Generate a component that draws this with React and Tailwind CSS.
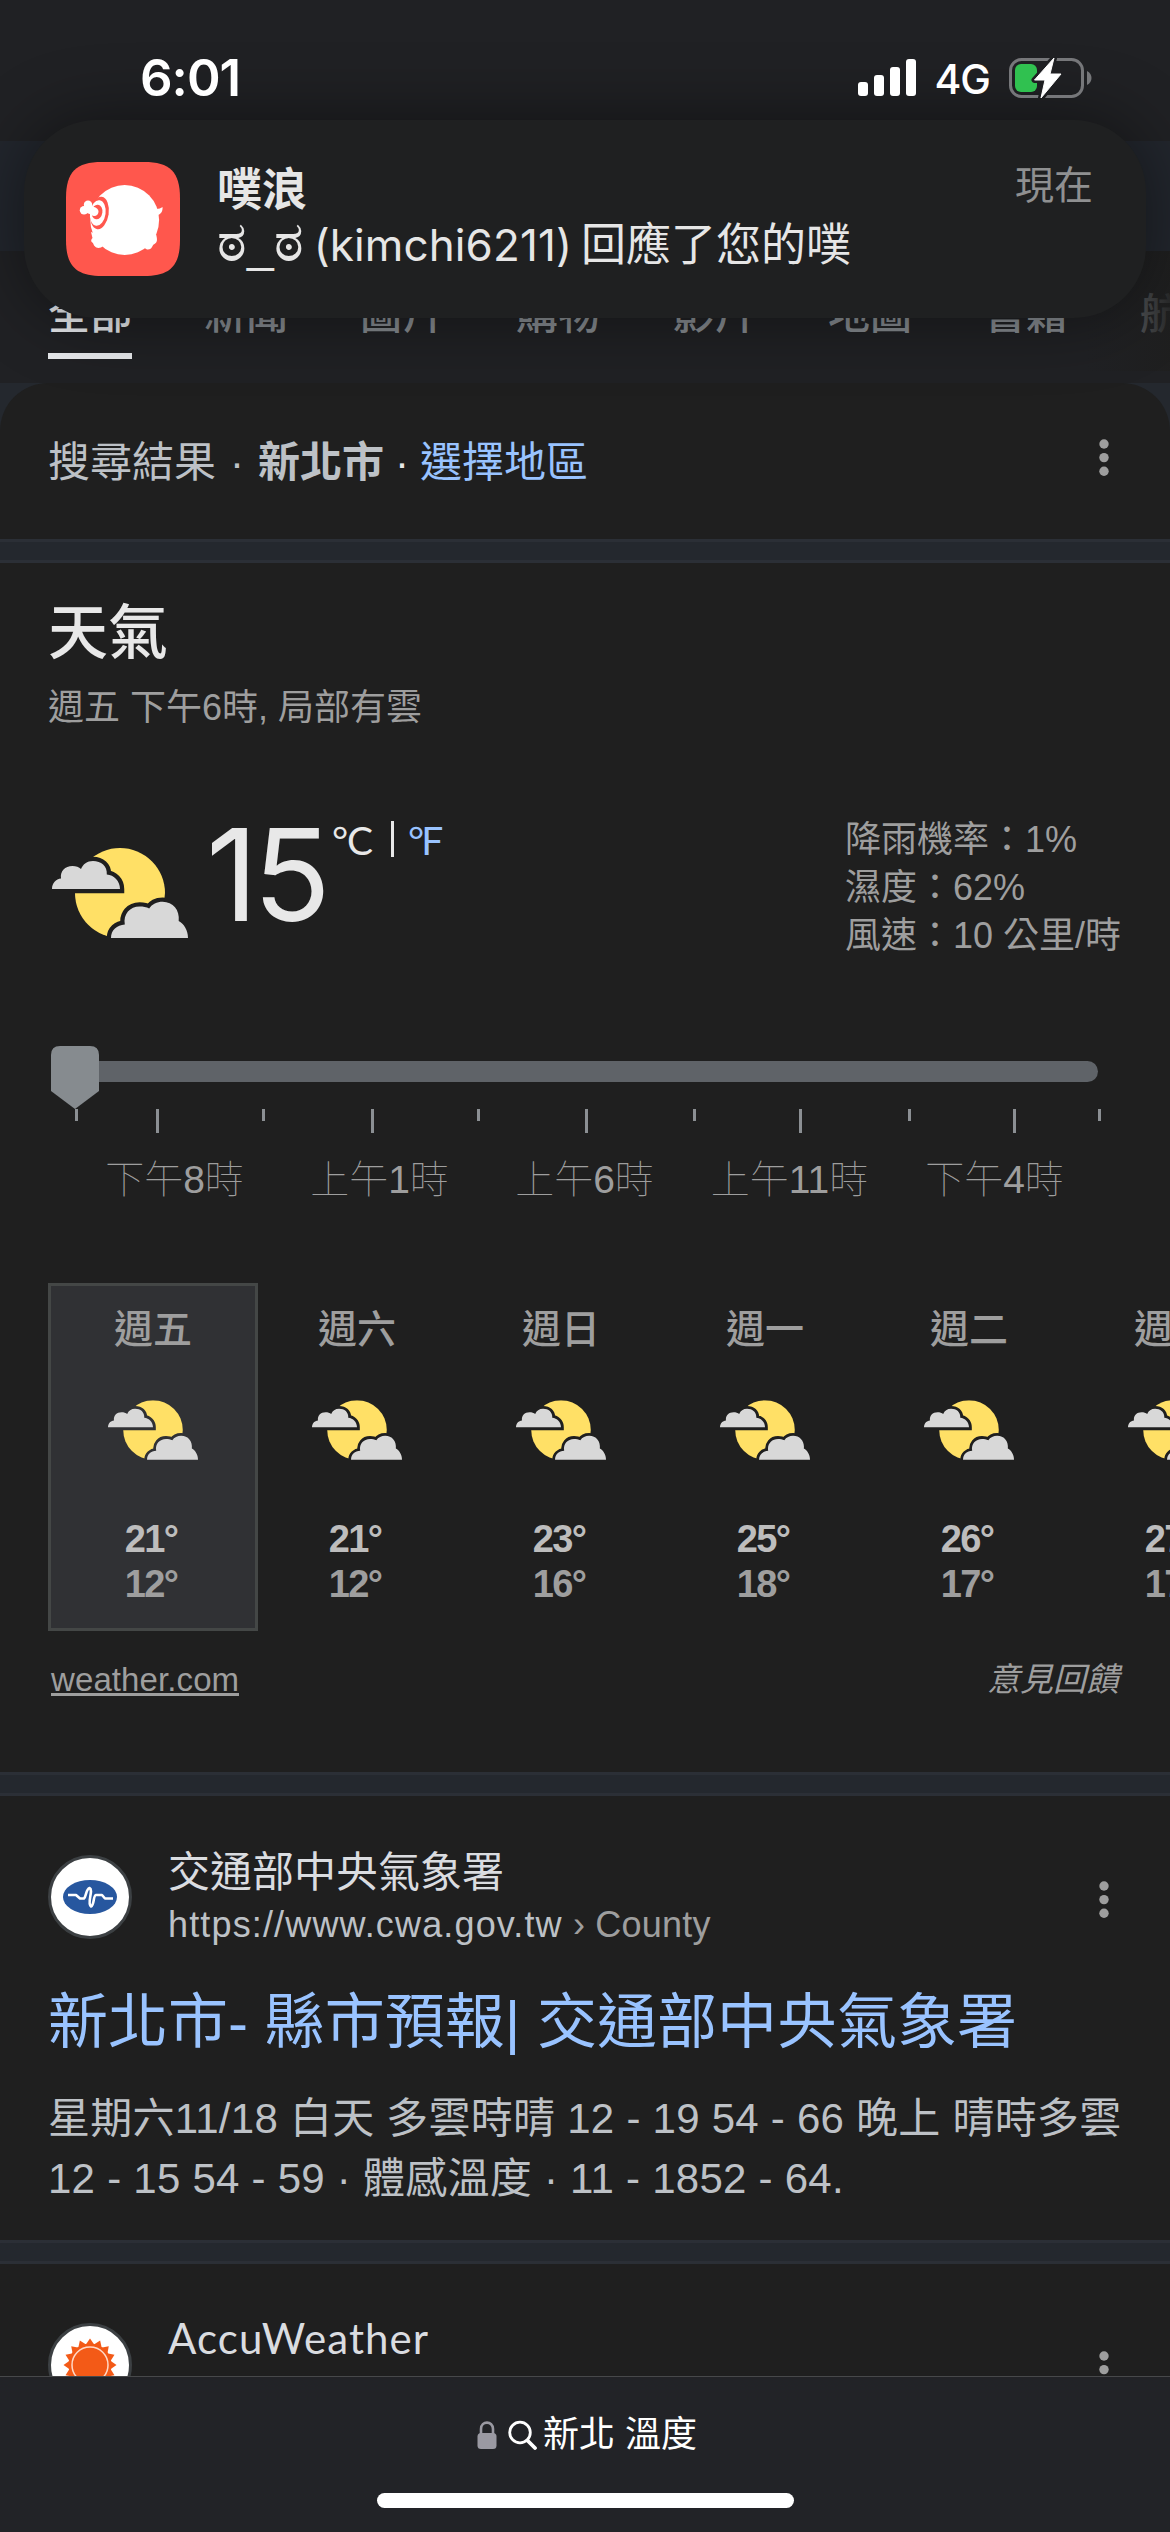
import React from "react";

const tabs = ["全部", "新聞", "圖片", "購物", "影片", "地圖", "書籍", "航"];

const ticks = [75, 156, 262, 371, 477, 585, 693, 799, 908, 1013, 1098];

const hours = ["下午8時", "上午1時", "上午6時", "上午11時", "下午4時"];

const days = [
  { name: "週五", high: 21, low: 12 },
  { name: "週六", high: 21, low: 12 },
  { name: "週日", high: 23, low: 16 },
  { name: "週一", high: 25, low: 18 },
  { name: "週二", high: 26, low: 17 },
  { name: "週三", high: 27, low: 17 },
];

const CLOUD_BACK =
  "M0 41 C0 35 4 31 9 30.5 C8 23 13 18 20.5 18 C24 18 27 19 29 21 C31 16 35 13 41 13 C49 13 55.5 18 54.8 26.5 C62 27 68 33 68 41 Z";
const CLOUD_FRONT =
  "M59 90 C59 82 65 77 72.8 76.5 C71 66 78 58.5 87.7 58.5 C91 58.5 94.5 59 97.2 60.5 C100 56 105 53.7 110.6 53.7 C121 53.7 128 62 126.7 73 C132 76 136 82 136 90 Z";

const PartlyCloudy = ({ id, className }) => (
  <svg className={className} viewBox="0 0 136 90" aria-hidden="true">
    <mask id={id}>
      <rect width="136" height="90" fill="white" />
      <path d={CLOUD_BACK} fill="black" stroke="black" strokeWidth="8.5" />
      <path d={CLOUD_FRONT} fill="black" stroke="black" strokeWidth="8.5" />
    </mask>
    <circle cx="68" cy="45" r="45" fill="#ffe066" mask={`url(#${id})`} />
    <path d={CLOUD_BACK} fill="#d8d8d8" />
    <path d={CLOUD_FRONT} fill="#d8d8d8" />
  </svg>
);

const MoreIcon = ({ className }) => (
  <svg className={className} viewBox="0 0 10 38" fill="#9e9e9e" aria-hidden="true">
    <circle cx="5" cy="5" r="4.7" />
    <circle cx="5" cy="18.6" r="4.7" />
    <circle cx="5" cy="32.2" r="4.7" />
  </svg>
);

const Divider = () => <div className="h-6 shrink-0 border-y-[3px] border-[#2b2f36] bg-[#24282e]" />;

const StatusBar = () => (
  <div className="relative z-20 flex h-[141px] items-start justify-between pl-[140px] pr-[77px]">
    <div className="mt-[48px] font-[Inter] text-[51px] font-semibold leading-[60px] tracking-[-1px] text-white">6:01</div>
    <div className="mt-[57px] flex h-[42px] items-start">
      <svg className="mt-[2px] h-[38px] w-[60px]" viewBox="0 0 60 38" fill="white" aria-hidden="true">
        <rect x="1" y="23" width="10" height="14" rx="3" />
        <rect x="17" y="16" width="10" height="21" rx="3" />
        <rect x="33" y="8" width="10" height="29" rx="3" />
        <rect x="49" y="0" width="10" height="37" rx="3" />
      </svg>
      <span className="ml-[17px] font-[Inter] text-[41px] font-medium leading-[44px] tracking-[-1px] text-white">4G</span>
      <svg className="ml-[19px] h-[42px] w-[84px]" viewBox="0 0 84 42" aria-hidden="true">
        <mask id="bolt-gap">
          <rect width="84" height="42" fill="white" />
          <path d="M45 1 L25.5 23 H36 L32 41 L52 17 H41 Z" fill="black" stroke="black" strokeWidth="6" strokeLinejoin="round" />
        </mask>
        <g mask="url(#bolt-gap)">
          <rect x="1.5" y="2.5" width="72" height="37" rx="11" fill="none" stroke="#76777a" strokeWidth="3" />
          <rect x="6" y="7" width="22" height="28" rx="6" fill="#30c150" />
        </g>
        <path d="M78 14 C84 17 84 25 78 28 Z" fill="#76777a" />
        <path d="M45 1 L25.5 23 H36 L32 41 L52 17 H41 Z" fill="white" stroke="white" strokeWidth="1" strokeLinejoin="round" />
      </svg>
    </div>
  </div>
);

const PlurkIcon = () => (
  <svg className="size-[114px] shrink-0" viewBox="0 0 114 114" aria-hidden="true">
    <path
      d="M36 0 H78 C104 0 114 10 114 36 V78 C114 104 104 114 78 114 H36 C10 114 0 104 0 78 V36 C0 10 10 0 36 0 Z"
      fill="#ff574d"
    />
    <g fill="white">
      <ellipse cx="58.7" cy="58" rx="34.4" ry="35" />
      <path d="M86 43 L90 47 C93 47 95 46 96.5 45 C97 49 95 52 92 53 L90 56 Z" />
      <path d="M25 70 L26.5 76 C24.5 78 25 80 27 81 C28 84 30 87 35 85.5 L46 78 Z" />
      <path d="M90 72 C91.5 78 91.5 80 88.5 82 C85.5 83 87 88 81 87.5 L72 82 Z" />
    </g>
    <ellipse cx="33.5" cy="51" rx="9.2" ry="16.3" fill="#ff574d" transform="rotate(8 33.5 51)" />
    <ellipse cx="31.8" cy="51" rx="7.8" ry="12.8" fill="white" transform="rotate(8 31.8 51)" />
    <ellipse cx="31" cy="50" rx="5.4" ry="7.4" fill="#ff574d" transform="rotate(8 31 50)" />
    <g fill="white">
      <circle cx="22" cy="42.7" r="4.2" />
      <circle cx="18" cy="48.3" r="4.2" />
      <path d="M22 42 L30 46 L28 53.5 L18 50 Z" />
      <circle cx="28.3" cy="49.8" r="4.2" />
    </g>
  </svg>
);

const Notification = () => (
  <div className="absolute left-[24px] top-[120px] z-10 flex h-[198px] w-[1122px] rounded-[72px] bg-[#1f2021] pl-[42px] pt-[42px] shadow-[0_0_70px_rgba(0,0,0,0.45)]">
    <PlurkIcon />
    <div className="ml-[37px] mt-[2px] grow text-[#e6e6e6]">
      <div className="text-[45px] font-bold leading-[54px]">噗浪</div>
      <div className="flex h-[53px] items-baseline whitespace-nowrap font-[Inter,'Noto_Sans_CJK_TC',sans-serif] text-[44px] leading-[53px]">
        <span className="text-[56px] leading-[40px]">ಠ</span>
        <span className="font-['Liberation_Sans'] text-[48px] leading-[40px]">_</span>
        <span className="text-[56px] leading-[40px]">ಠ</span>
        <span className="ml-[10px] tracking-[0.1px]">(kimchi6211)</span>
        <span className="ml-[9px] text-[45px]">回應了您的噗</span>
      </div>
    </div>
    <div className="-mt-[2px] mr-[53px] text-[39px] leading-[52px] text-[#8f9091]">現在</div>
  </div>
);

const Tabs = () => (
  <div className="relative h-[132px] shrink-0 overflow-hidden pl-12 pt-[34px]">
    <div className="flex gap-[72px]">
      {tabs.map((tab, i) => (
        <div
          key={tab}
          className={
            i === 0
              ? "shrink-0 border-b-[6px] border-[#e8eaed] pb-[8px] text-[42px] font-medium leading-[60px] text-[#e8eaed]"
              : "shrink-0 text-[42px] font-medium leading-[60px] text-[#868b90]"
          }
        >
          {tab}
        </div>
      ))}
    </div>
    {/* fade towards the scrolled-off tabs */}
    <div className="absolute right-0 top-0 h-[120px] w-[84px] bg-linear-to-r from-transparent to-[#1f1f1f]/90" />
  </div>
);

const Weather = () => (
  <section className="h-[1209px] shrink-0 overflow-hidden bg-[#1f1f1f] px-12">
    <h2 className="mt-[35px] text-[60px] font-medium leading-[72px] text-[#e8e8e8]">天氣</h2>
    <p className="mt-[14px] text-[36px] leading-[48px] text-[#9e9e9e]">週五 下午6時, 局部有雲</p>

    <div className="mt-[82px] flex h-[148px]">
      <PartlyCloudy id="sun-now" className="ml-1 mt-[34px] h-[90px] w-[136px]" />
      <span className="ml-[18px] font-[Inter] text-[128px] leading-[122px] tracking-[-5px] text-[#e8e8e8]">15</span>
      <div className="ml-[6px] mt-[2px] flex font-[Lato] text-[39px] leading-[48px] text-[#e8e8e8]">
        <span className="tracking-[-1px]">°C</span>
        <span className="ml-[19px] mr-[14px] mt-[5px] h-[36px] w-[3px] bg-[#e8e8e8]" />
        <span className="tracking-[-3px] text-[#99c3ff]">°F</span>
      </div>
      <div className="ml-auto mr-[1px] mt-[2px] text-[36px] leading-[48px] text-[#9e9e9e]">
        <div>降雨機率：1%</div>
        <div>濕度：62%</div>
        <div>風速：10 公里/時</div>
      </div>
    </div>

    {/* hourly slider */}
    <div className="mt-[84px] flex h-[63px] items-start pl-[3px]">
      <svg className="z-10 h-[63px] w-[48px]" viewBox="0 0 48 63" aria-hidden="true">
        <path d="M9 0 H39 Q48 0 48 9 V45 L24 63 L0 45 V9 Q0 0 9 0 Z" fill="#868b8f" />
      </svg>
      <div className="-ml-4 mt-[15px] h-[21px] w-[1015px] rounded-full bg-[#5f6368]" />
    </div>
    <div className="relative h-6">
      {ticks.map((x, i) => (
        <span
          key={x}
          className={i % 2 ? "absolute top-0 h-6 w-[3px] bg-[#8b8f93]" : "absolute top-0 h-3 w-[3px] bg-[#8b8f93]"}
          style={{ left: x - 48 }}
        />
      ))}
    </div>
    <div className="ml-[24px] mt-[18px] flex">
      {hours.map((h) => (
        <span key={h} className="w-[205px] shrink-0 text-center text-[39px] font-thin leading-[58px] text-[#9e9e9e]">
          {h}
        </span>
      ))}
    </div>

    <div className="mt-[74px] flex w-[1224px]">
      {days.map((d, i) => (
        <div
          key={d.name}
          className={
            i === 0
              ? "-mr-[6px] flex h-[348px] w-[210px] shrink-0 flex-col items-center border-[3px] border-[#444746] bg-[#303134]"
              : "-mr-[6px] flex h-[348px] w-[210px] shrink-0 flex-col items-center border-[3px] border-transparent"
          }
        >
          <div className="mt-[20px] text-[39px] font-medium leading-[48px] text-[#9e9e9e]">{d.name}</div>
          <PartlyCloudy id={`sun-${i}`} className="mt-[46px] h-[60px] w-[90px]" />
          <div className="mt-[57px] pr-[4px] text-[38px] font-bold leading-[45px] tracking-[-1.7px] text-[#bdbdbd]">{d.high}°</div>
          <div className="pr-[4px] text-[38px] font-bold leading-[45px] tracking-[-1.7px] text-[#9e9e9e]">{d.low}°</div>
        </div>
      ))}
    </div>

    <div className="mt-[25px] flex justify-between pl-[3px] text-[33px] leading-[48px] text-[#9e9e9e]">
      <a className="h-[40px] border-b-[3px] border-[#9e9e9e] leading-[48px] tracking-[0.1px]">weather.com</a>
      <span className="mr-[3px] italic">意見回饋</span>
    </div>
  </section>
);

const CwaLogo = () => (
  <svg className="size-[54px]" viewBox="0 0 54 54" aria-hidden="true">
    <ellipse cx="27" cy="27" rx="27" ry="17" fill="#27579f" />
    <path
      d="M5 25 H13 L17 28.5 H21 C23 27 23 19 26.5 18 C31 20 23.5 33 28 36.5 C31.5 35 30 25.5 33 25 L39 25 L42 28.5 H50"
      fill="none"
      stroke="white"
      strokeWidth="2.6"
      strokeLinejoin="round"
    />
  </svg>
);

const AccuLogo = () => (
  <svg className="size-[54px]" viewBox="-27 -27 54 54" aria-hidden="true">
    <g fill="#f35a17">
      <circle r="21.5" />
      {Array.from({ length: 16 }, (_, i) => (
        <path key={i} d="M-4.5 -20 L0 -26.5 L4.5 -20 Z" transform={`rotate(${i * 22.5})`} />
      ))}
    </g>
    <circle r="18" fill="none" stroke="#ffd9c7" strokeWidth="1.5" />
  </svg>
);

const Favicon = ({ children }) => (
  <div className="flex size-[84px] shrink-0 items-center justify-center rounded-full border-[3px] border-[#3c4043] bg-white">
    {children}
  </div>
);

export default function App() {
  return (
    <div className="relative flex h-[2532px] w-[1170px] flex-col overflow-hidden bg-[#202124] font-['Liberation_Sans','Noto_Sans_CJK_TC',sans-serif]">
      <StatusBar />
      <div className="h-[110px] shrink-0 bg-[#22262d]" />
      <Tabs />
      <Notification />

      <div className="shrink-0 bg-[#24282e]">
        <div className="flex h-[156px] items-start rounded-t-[48px] bg-[#1f1f1f] px-12 pt-[50px] text-[42px] leading-[60px] text-[#bdc1c6]">
          <span>搜尋結果</span>
          <span className="w-[42px] text-center">·</span>
          <span className="font-bold">新北市</span>
          <span className="w-[36px] text-center text-[#e8e8e8]">·</span>
          <span className="text-[#99c3ff]">選擇地區</span>
          <MoreIcon className="ml-auto mr-[13px] mt-[6px] h-[38px] w-[10px]" />
        </div>
      </div>
      <Divider />
      <Weather />
      <Divider />

      <section className="h-[444px] shrink-0 bg-[#1f1f1f] px-12 pt-[44px]">
        <div className="flex items-start">
          <div className="mt-[15px]">
            <Favicon>
              <CwaLogo />
            </Favicon>
          </div>
          <div className="ml-9 grow">
            <div className="mt-[4px] text-[42px] leading-[58px] text-[#dadce0]">交通部中央氣象署</div>
            <div className="text-[36px] leading-[46px] tracking-[1.15px] text-[#bdc1c6]">
              https://www.cwa.gov.tw<span className="tracking-[0.2px] text-[#9e9e9e]"> › County</span>
            </div>
          </div>
          <MoreIcon className="mr-[13px] mt-[41px] h-[38px] w-[10px]" />
        </div>
        <h3 className="mt-[39px] whitespace-nowrap text-[60px] leading-[72px] text-[#99c3ff]">新北市- 縣市預報| 交通部中央氣象署</h3>
        <p className="mt-[30px] whitespace-nowrap text-[42px] leading-[60px] tracking-[0.25px] text-[#bdc1c6]">
          星期六11/18 白天 多雲時晴 12 - 19 54 - 66 晚上 晴時多雲
          <br />
          12 - 15 54 - 59 · 體感溫度 · 11 - 1852 - 64.
        </p>
      </section>
      <Divider />

      <section className="flex h-[112px] shrink-0 items-start overflow-hidden bg-[#1f1f1f] px-12 pt-[44px]">
        <div className="mt-[15px]">
          <Favicon>
            <AccuLogo />
          </Favicon>
        </div>
        <div className="ml-9 grow font-[Lato] text-[42px] leading-[60px] tracking-[1.1px] text-[#dadce0]">AccuWeather</div>
        <MoreIcon className="mr-[13px] mt-[43px] h-[38px] w-[10px]" />
      </section>

      <footer className="flex h-[156px] shrink-0 flex-col items-center border-t border-[#47484a] bg-[#222327]">
        <div className="mt-[32px] flex h-[52px] items-center pl-[4px] text-[36px] leading-[52px] text-white">
          <svg className="h-[28px] w-[20px]" viewBox="0 0 20 28" aria-hidden="true">
            <rect x="0.5" y="12" width="19" height="16" rx="3.5" fill="#9a99a2" />
            <path d="M4 13 V8 C4 -0.5 16 -0.5 16 8 V13" fill="none" stroke="#9a99a2" strokeWidth="2.6" />
          </svg>
          <svg className="ml-[11px] h-[30px] w-[30px]" viewBox="0 0 30 30" fill="none" stroke="white" strokeLinecap="round" aria-hidden="true">
            <circle cx="12" cy="12.5" r="10.3" strokeWidth="2.8" />
            <path d="M19.5 20.5 L27 28" strokeWidth="3.8" />
          </svg>
          <span className="ml-[5px]">新北 溫度</span>
        </div>
        <div className="mt-[32px] h-[15px] w-[417px] rounded-full bg-white" />
      </footer>
    </div>
  );
}
